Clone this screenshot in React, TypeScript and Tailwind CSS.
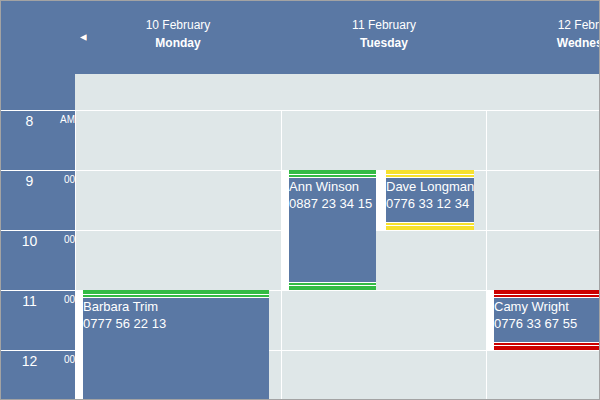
import React from 'react'

interface CalEvent {
  name: string
  phone: string
  start: number
  end: number
  left: number
  strip: number
  width: number
  bar: string
}

const days = [
  { date: '10 February', name: 'Monday', width: 'w-[206px]' },
  { date: '11 February', name: 'Tuesday', width: 'w-[206px]' },
  { date: '12 February', name: 'Wednesday', width: 'w-[206px]' },
]

const hours = [
  { h: '8', suffix: 'AM' },
  { h: '9', suffix: '00' },
  { h: '10', suffix: '00' },
  { h: '11', suffix: '00' },
  { h: '12', suffix: '00' },
]

const events: CalEvent[] = [
  { name: 'Barbara Trim', phone: '0777 56 22 13', start: 11, end: 15, left: 75, strip: 7, width: 186, bar: 'bg-[#33bb44]' },
  { name: 'Ann Winson', phone: '0887 23 34 15', start: 9, end: 11, left: 281, strip: 7, width: 87, bar: 'bg-[#33bb44]' },
  { name: 'Dave Longman', phone: '0776 33 12 34', start: 9, end: 10, left: 375, strip: 10, width: 88, bar: 'bg-[#f7e12d]' },
  { name: 'Camy Wright', phone: '0776 33 67 55', start: 11, end: 12, left: 486, strip: 7, width: 187, bar: 'bg-[#cc0000]' },
]

const HOUR = 60

function Bars({ bar, flip }: { bar: string; flip?: boolean }) {
  const parts = [
    <div key="a" className={`h-[4px] ${bar}`} />,
    <div key="b" className="h-px bg-white" />,
    <div key="c" className={`h-[2px] ${bar}`} />,
    <div key="d" className="h-px bg-white" />,
  ]
  return <>{flip ? parts.reverse() : parts}</>
}

function EventBox({ ev }: { ev: CalEvent }) {
  return (
    <div
      className="absolute flex"
      style={{ left: ev.left, top: (ev.start - 8) * HOUR, height: (ev.end - ev.start) * HOUR }}
    >
      <div className="bg-white" style={{ width: ev.strip }} />
      <div className="flex flex-col" style={{ width: ev.width }}>
        <Bars bar={ev.bar} />
        <div className="flex-1 overflow-hidden bg-[#5a78a4] text-[13px] leading-[17px] text-white whitespace-nowrap">
          <div>{ev.name}</div>
          <div>{ev.phone}</div>
        </div>
        <Bars bar={ev.bar} flip />
      </div>
    </div>
  )
}

export default function App() {
  return (
    <div className="w-[600px] h-[400px] overflow-hidden border border-[#a3a3a3] bg-[#dfe7e8] font-['Liberation_Sans',Arial,sans-serif]">
      {/* day headers */}
      <div className="flex h-[73px] bg-[#5a78a4] text-white text-[12px] leading-[18px]">
        <div className="w-[74px] shrink-0" />
        {days.map((d, i) => (
          <div key={d.date} className={`relative ${d.width} shrink-0 pt-[15px] text-center whitespace-nowrap`}>
            {i === 0 && (
              <svg className="absolute left-[5px] top-[33px]" width="7" height="7" viewBox="0 0 7 7">
                <path d="M0 3.5 L6 0.5 L6 6.5 Z" fill="#ffffff" />
                <rect x="6" y="0.5" width="1" height="6" fill="#f6cdb8" />
              </svg>
            )}
            <div>{d.date}</div>
            <div className="font-bold">{d.name}</div>
          </div>
        ))}
      </div>

      {/* all-day row */}
      <div className="flex h-[36px]">
        <div className="w-[74px] shrink-0 bg-[#5a78a4]" />
        <div className="flex-1 bg-[#dfe7e8]" />
      </div>

      {/* hour grid */}
      <div className="relative">
        {hours.map((h) => (
          <div key={h.h} className="flex h-[60px] border-t border-white">
            <div className="flex w-[74px] shrink-0 bg-[#5a78a4] text-white">
              <div className="w-[57px] pt-[2px] text-center text-[14px] leading-4">{h.h}</div>
              <div className="flex-1 overflow-hidden pt-[3px] text-right text-[10px] leading-[12px]">{h.suffix}</div>
            </div>
            <div className="w-[206px] shrink-0 border-l border-white" />
            <div className="w-[205px] shrink-0 border-l border-white" />
            <div className="w-[206px] shrink-0 border-l border-white" />
          </div>
        ))}
        {events.map((ev) => (
          <EventBox key={ev.name} ev={ev} />
        ))}
      </div>
    </div>
  )
}
